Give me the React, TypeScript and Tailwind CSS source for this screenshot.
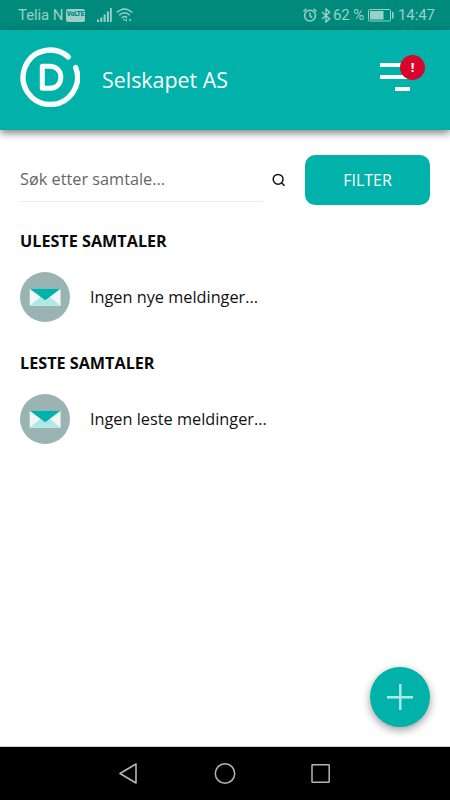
import React from "react";

const Logo = () => (
  <svg width="60" height="60" viewBox="0 0 60 60" fill="none" stroke="#fafcfc">
    <path d="M48.3 9.9A27.2 27.2 0 1 0 55.7 20.6" strokeWidth="5.4" strokeLinecap="round" />
    <path
      d="M22.3 19.3H29C37 19.3 40.8 24 40.8 30.3S37 41.3 29 41.3H22.3Z"
      strokeWidth="5"
      strokeLinejoin="round"
    />
  </svg>
);

const SignalIcon = () => (
  <svg width="16" height="14" viewBox="0 0 16 14" fill="currentColor">
    <path d="M0 11.5h2V14H0zM3.3 9.5h2V14h-2zM6.6 6.5h2V14h-2zM9.9 3.5h2V14h-2zM13 0h1.8v14H13z" />
  </svg>
);

const WifiIcon = () => (
  <svg width="18" height="15" viewBox="0 0 18 15" fill="none" stroke="currentColor" strokeWidth="1.5">
    <path d="M.7 4.5Q8.5-2.6 16.3 4.5M3.2 7.2Q8.5 2.2 13.8 7.2M5.7 10Q8.5 7.3 11 9.6" />
    <path d="M6.8 11.4L8.6 10.6V13.2zM11 10.5v3.2l-2-1.6zM13.4 10.5v3.2l2.2-1.6z" fill="currentColor" stroke="none" />
  </svg>
);

const AlarmIcon = () => (
  <svg width="14" height="14" viewBox="0 0 14 14" fill="none" stroke="currentColor" strokeWidth="1.5">
    <circle cx="7" cy="7.6" r="5.4" />
    <path d="M7 4.5v3.3l2.2 1.8M.5 3.4L3.4.8M13.5 3.4L10.6.8" />
  </svg>
);

const BluetoothIcon = () => (
  <svg width="10" height="15" viewBox="0 0 10 15" fill="none" stroke="currentColor" strokeWidth="1.4">
    <path d="M1 4l7.6 6.8L5 14V1l3.6 3.2L1 11" />
  </svg>
);

const BatteryIcon = () => (
  <svg width="26" height="13" viewBox="0 0 26 13" fill="none" stroke="currentColor">
    <rect x=".5" y=".5" width="22" height="11.5" rx="1.2" />
    <rect x="2" y="2" width="13.5" height="8.5" fill="currentColor" stroke="none" />
    <path d="M24.8 3v6.5" strokeWidth="1.6" />
  </svg>
);

const MailIcon = () => (
  <svg width="50" height="50" viewBox="0 0 50 50" className="shrink-0">
    <circle cx="25" cy="25" r="25" fill="#99b4b2" />
    <path d="M9.7 16.8H40.6V33.8H9.7Z" fill="#f3f5f7" />
    <path d="M9.7 33.8L21 24.5H29.3L40.6 33.8Z" fill="#b2e8e4" />
    <path d="M9.7 16.8H40.6L25.2 28.2Z" fill="#00b2a9" />
  </svg>
);

const StatusBar = () => (
  <div className="flex h-[30px] shrink-0 items-center justify-between bg-[#008a7c] pl-[18px] pr-[15px] font-['Roboto',sans-serif] text-[15px] text-[#99d0ca]">
    <div className="flex items-center">
      <span className="w-[48px] whitespace-nowrap pt-px tracking-[-0.1px]">Telia N</span>
      <span className="flex h-[13px] w-[19px] items-center justify-center rounded-[2px] bg-[#99d0ca] text-[6.5px] font-black tracking-[-0.2px] text-[#008a7c]">
        VoLTE
      </span>
      <span className="ml-3">
        <SignalIcon />
      </span>
      <span className="ml-[3px]">
        <WifiIcon />
      </span>
    </div>
    <div className="flex items-center">
      <AlarmIcon />
      <span className="ml-1">
        <BluetoothIcon />
      </span>
      <span className="ml-[2px] w-[35px] whitespace-nowrap pt-px tracking-[-0.1px]">62 %</span>
      <BatteryIcon />
      <span className="ml-1 w-[37px] whitespace-nowrap pt-px tracking-[-0.1px]">14:47</span>
    </div>
  </div>
);

const Header = () => (
  <header className="flex h-[100px] shrink-0 items-start bg-[#00b2a9] px-5 pt-[17px] shadow-[0_3px_8px_rgba(0,0,0,0.5)]">
    <Logo />
    <h1 className="ml-[22px] mt-[18px] text-[21.4px] leading-[30px] text-white">Selskapet AS</h1>
    <button className="relative ml-auto mr-[5px] mt-4 flex h-[28px] w-[45px] flex-col gap-2">
      <span className="h-1 w-[30px] bg-white" />
      <span className="h-1 w-[30px] bg-white" />
      <span className="ml-[15px] h-1 w-[15px] bg-white" />
      <span className="absolute -top-2 right-0 flex size-[25px] items-center justify-center rounded-full bg-[#d9042b] text-[13px] font-bold text-white">
        !
      </span>
    </button>
  </header>
);

type SectionProps = {
  title: string;
  message: string;
};

const Section = ({ title, message }: SectionProps) => (
  <section className="mb-[30px]">
    <h2 className="text-[16.2px] font-bold leading-[22px] text-[#0a0a0a]">{title}</h2>
    <div className="mt-5 flex items-center gap-5">
      <MailIcon />
      <p className="text-[16.3px] text-[#111]">{message}</p>
    </div>
  </section>
);

const App = () => {
  return (
    <div className="flex h-[800px] w-[450px] flex-col overflow-hidden bg-white font-['Open_Sans',sans-serif]">
      <StatusBar />
      <Header />
      <main className="relative flex-1 px-5 pt-[25px]">
        <div className="mb-[25px] flex h-[50px]">
          <div className="flex h-[47px] w-[243px] items-center border-b border-[#ebebeb] pt-[3px] text-[16.3px] text-[#666]">
            Søk etter samtale...
          </div>
          <svg
            width="14"
            height="14"
            viewBox="0 0 14 14"
            className="ml-[9px] mt-[18px]"
            fill="none"
            stroke="#111"
            strokeWidth="1.5"
          >
            <circle cx="6.1" cy="6.3" r="4.9" />
            <path d="M9.5 9.7L12.6 12.8" />
          </svg>
          <button className="ml-auto h-[50px] w-[125px] rounded-[10px] bg-[#00b2a9] text-[16px] text-white">
            FILTER
          </button>
        </div>
        <Section title="ULESTE SAMTALER" message="Ingen nye meldinger..." />
        <Section title="LESTE SAMTALER" message="Ingen leste meldinger..." />
        <button className="absolute bottom-[19px] right-5 flex size-[60px] items-center justify-center rounded-full bg-[#00b2a9] shadow-[0_3px_8px_rgba(0,0,0,0.4)]">
          <svg width="26" height="26" viewBox="0 0 26 26" stroke="#b2e8e4" strokeWidth="2.4">
            <path d="M13.3 0V26M0 13.3H26" />
          </svg>
        </button>
      </main>
      <nav className="flex h-[54px] shrink-0 items-center justify-center gap-[74px] border-t border-[#c8cccc] bg-black">
        <svg width="22" height="22" viewBox="0 0 22 22" fill="none" stroke="#b5b5b5" strokeWidth="1.6" strokeLinejoin="round">
          <path d="M18 1V20L2 10.5Z" />
        </svg>
        <svg width="22" height="22" viewBox="0 0 22 22" fill="none" stroke="#b5b5b5" strokeWidth="1.5">
          <circle cx="11" cy="10.5" r="9.7" />
        </svg>
        <svg width="22" height="22" viewBox="0 0 22 22" fill="none" stroke="#b5b5b5" strokeWidth="1.5">
          <rect x="2" y="1.7" width="17.2" height="17.5" rx=".5" />
        </svg>
      </nav>
    </div>
  );
};

export default App;
